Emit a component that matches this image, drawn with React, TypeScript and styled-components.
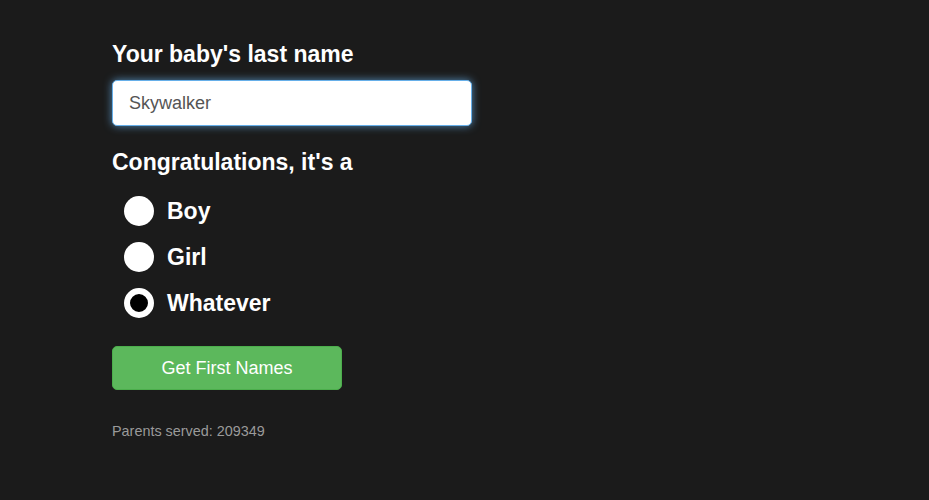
import React, {useState} from 'react';
import styled, {createGlobalStyle} from 'styled-components';

const GlobalStyle = createGlobalStyle`
  html, body {
    margin: 0;
    padding: 0;
    background: #1b1b1b;
  }
  body {
    font-family: 'Liberation Sans', Arial, sans-serif;
    color: #fff;
  }
`;

type Gender = 'boy' | 'girl' | 'whatever';

const options: {value: Gender, label: string}[] = [
    {value: 'boy', label: 'Boy'},
    {value: 'girl', label: 'Girl'},
    {value: 'whatever', label: 'Whatever'},
];

const App: React.FC = () => {

    const [lastName, setLastName] = useState('Skywalker');
    const [gender, setGender] = useState<Gender>('whatever');

    return (
    <Page>
        <GlobalStyle />
        <Form onSubmit={e => e.preventDefault()}>
            <Heading>Your baby's last name</Heading>
            <NameInput value={lastName} onChange={e => setLastName(e.target.value)} />
            <SubHeading>Congratulations, it's a</SubHeading>
            <RadioList>
                {options.map(o => (
                    <RadioRow key={o.value} onClick={() => setGender(o.value)}>
                        <RadioDot checked={gender === o.value} />
                        <RadioLabel>{o.label}</RadioLabel>
                    </RadioRow>
                ))}
            </RadioList>
            <SubmitButton type="submit">Get First Names</SubmitButton>
            <Served>Parents served: 209349</Served>
        </Form>
    </Page>)
}

export default App;

const Page = styled.div`
  min-height: 500px;
  padding: 41px 0 0 112px;
  box-sizing: border-box;
`;

const Form = styled.form`
  display: flex;
  flex-direction: column;
  align-items: flex-start;
`;

const Heading = styled.h2`
  margin: 0;
  font-size: 23px;
  line-height: 26px;
  font-weight: bold;
  color: #fff;
`;

const NameInput = styled.input`
  margin-top: 13px;
  width: 360px;
  height: 46px;
  box-sizing: border-box;
  padding: 0 16px;
  border: 1px solid #66afe9;
  border-radius: 5px;
  background: #fff;
  box-shadow: 0 0 8px rgba(102, 175, 233, 0.75);
  font-family: 'Liberation Sans', Arial, sans-serif;
  font-size: 18px;
  color: #555;
  outline: none;
`;

const SubHeading = styled(Heading)`
  margin-top: 23px;
`;

const RadioList = styled.div`
  display: flex;
  flex-direction: column;
  margin-top: 13px;
`;

const RadioRow = styled.label`
  display: flex;
  align-items: center;
  height: 46px;
  padding-left: 12px;
  cursor: pointer;
`;

const RadioDot = styled.span<{checked: boolean}>`
  width: 30px;
  height: 30px;
  border-radius: 50%;
  box-sizing: border-box;
  background: ${p => p.checked ? '#000' : '#fff'};
  border: ${p => p.checked ? '6px solid #fff' : 'none'};
`;

const RadioLabel = styled.span`
  margin-left: 13px;
  font-size: 23px;
  font-weight: bold;
  color: #fff;
`;

const SubmitButton = styled.button`
  margin-top: 20px;
  width: 230px;
  height: 44px;
  border: 1px solid #4cae4c;
  border-radius: 5px;
  background: #5cb85c;
  color: #fff;
  font-family: 'Liberation Sans', Arial, sans-serif;
  font-size: 18px;
  cursor: pointer;
`;

const Served = styled.p`
  margin: 32px 0 0;
  font-size: 14.4px;
  line-height: 18px;
  color: #9a9a9a;
`;
